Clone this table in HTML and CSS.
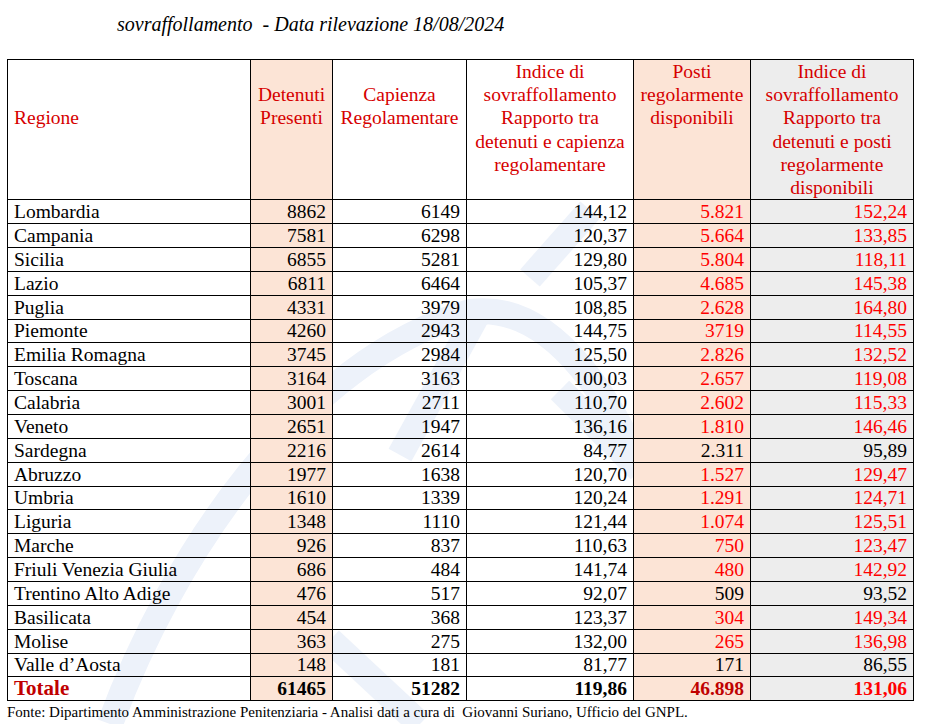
FILE: index.html
```html
<!DOCTYPE html>
<html lang="it">
<head>
<meta charset="utf-8">
<title>Sovraffollamento - Data rilevazione 18/08/2024</title>
<link rel="stylesheet" href="styles.css">
</head>
<body>
<div class="page">
  <svg class="watermark" width="940" height="724" viewBox="0 0 940 724" aria-hidden="true">
    <g fill="none" stroke="#edf2fa" stroke-width="26" stroke-linecap="butt">
      <path d="M110 724 C 170 560, 300 360, 470 312 C 560 300, 620 420, 640 470"/>
      <path d="M400 455 L 480 310"/>
      <path d="M530 278 L 590 210"/>
      <path d="M560 390 L 640 470"/>
      <path d="M330 640 L 420 724"/>
    </g>
  </svg>
  <h1 class="title">sovraffollamento&nbsp; - Data rilevazione 18/08/2024</h1>
  <table class="grid">
    <colgroup>
      <col class="c1"><col class="c2"><col class="c3"><col class="c4"><col class="c5"><col class="c6">
    </colgroup>
    <thead>
      <tr class="head">
        <th class="h-left pad2">Regione</th>
        <th class="pink pad1">Detenuti Presenti</th>
        <th class="pad1">Capienza Regolamentare</th>
        <th>Indice di sovraffollamento Rapporto tra detenuti e capienza regolamentare</th>
        <th class="pink">Posti regolarmente disponibili</th>
        <th class="grey">Indice di sovraffollamento Rapporto tra detenuti e posti regolarmente disponibili</th>
      </tr>
    </thead>
    <tbody>
      <tr><td class="name">Lombardia</td><td class="pink">8862</td><td>6149</td><td>144,12</td><td class="pink red">5.821</td><td class="grey red">152,24</td></tr>
      <tr><td class="name">Campania</td><td class="pink">7581</td><td>6298</td><td>120,37</td><td class="pink red">5.664</td><td class="grey red">133,85</td></tr>
      <tr><td class="name">Sicilia</td><td class="pink">6855</td><td>5281</td><td>129,80</td><td class="pink red">5.804</td><td class="grey red">118,11</td></tr>
      <tr><td class="name">Lazio</td><td class="pink">6811</td><td>6464</td><td>105,37</td><td class="pink red">4.685</td><td class="grey red">145,38</td></tr>
      <tr><td class="name">Puglia</td><td class="pink">4331</td><td>3979</td><td>108,85</td><td class="pink red">2.628</td><td class="grey red">164,80</td></tr>
      <tr><td class="name">Piemonte</td><td class="pink">4260</td><td>2943</td><td>144,75</td><td class="pink red">3719</td><td class="grey red">114,55</td></tr>
      <tr><td class="name">Emilia Romagna</td><td class="pink">3745</td><td>2984</td><td>125,50</td><td class="pink red">2.826</td><td class="grey red">132,52</td></tr>
      <tr><td class="name">Toscana</td><td class="pink">3164</td><td>3163</td><td>100,03</td><td class="pink red">2.657</td><td class="grey red">119,08</td></tr>
      <tr><td class="name">Calabria</td><td class="pink">3001</td><td>2711</td><td>110,70</td><td class="pink red">2.602</td><td class="grey red">115,33</td></tr>
      <tr><td class="name">Veneto</td><td class="pink">2651</td><td>1947</td><td>136,16</td><td class="pink red">1.810</td><td class="grey red">146,46</td></tr>
      <tr><td class="name">Sardegna</td><td class="pink">2216</td><td>2614</td><td>84,77</td><td class="pink">2.311</td><td class="grey">95,89</td></tr>
      <tr><td class="name">Abruzzo</td><td class="pink">1977</td><td>1638</td><td>120,70</td><td class="pink red">1.527</td><td class="grey red">129,47</td></tr>
      <tr><td class="name">Umbria</td><td class="pink">1610</td><td>1339</td><td>120,24</td><td class="pink red">1.291</td><td class="grey red">124,71</td></tr>
      <tr><td class="name">Liguria</td><td class="pink">1348</td><td>1110</td><td>121,44</td><td class="pink red">1.074</td><td class="grey red">125,51</td></tr>
      <tr><td class="name">Marche</td><td class="pink">926</td><td>837</td><td>110,63</td><td class="pink red">750</td><td class="grey red">123,47</td></tr>
      <tr><td class="name">Friuli Venezia Giulia</td><td class="pink">686</td><td>484</td><td>141,74</td><td class="pink red">480</td><td class="grey red">142,92</td></tr>
      <tr><td class="name">Trentino Alto Adige</td><td class="pink">476</td><td>517</td><td>92,07</td><td class="pink">509</td><td class="grey">93,52</td></tr>
      <tr><td class="name">Basilicata</td><td class="pink">454</td><td>368</td><td>123,37</td><td class="pink red">304</td><td class="grey red">149,34</td></tr>
      <tr><td class="name">Molise</td><td class="pink">363</td><td>275</td><td>132,00</td><td class="pink red">265</td><td class="grey red">136,98</td></tr>
      <tr><td class="name">Valle d’Aosta</td><td class="pink">148</td><td>181</td><td>81,77</td><td class="pink">171</td><td class="grey">86,55</td></tr>
      <tr class="total"><td class="name total-label">Totale</td><td class="pink">61465</td><td>51282</td><td>119,86</td><td class="pink dark-red">46.898</td><td class="grey red">131,06</td></tr>
    </tbody>
  </table>
  <p class="source">Fonte: Dipartimento Amministrazione Penitenziaria - Analisi dati a cura di&nbsp; Giovanni Suriano, Ufficio del GNPL.</p>
</div>
</body>
</html>
```
FILE: styles.css
```css
* { box-sizing: border-box; }

body {
  margin: 0;
  background: #ffffff;
  color: #000000;
  font-family: "Liberation Serif", "Times New Roman", serif;
}

.page {
  position: relative;
  width: 940px;
  height: 724px;
  overflow: hidden;
}

.watermark {
  position: absolute;
  left: 0;
  top: 0;
}

.title {
  position: relative;
  margin: 0;
  height: 59px;
  padding: 12px 0 0 117px;
  font-size: 20px;
  line-height: 24px;
  font-style: italic;
  font-weight: normal;
}

.grid {
  position: relative;
  margin-left: 7px;
  width: 906px;
  border-collapse: collapse;
  table-layout: fixed;
  font-size: 19.5px;
}

.c1 { width: 243px; }
.c2 { width: 82px; }
.c3 { width: 134px; }
.c4 { width: 167px; }
.c5 { width: 117px; }
.c6 { width: 163px; }

.grid th,
.grid td {
  border: 1px solid #000000;
  padding: 0 6px;
}

.head th {
  height: 139px;
  vertical-align: top;
  text-align: center;
  font-weight: normal;
  color: #d60000;
  line-height: 23.2px;
  padding: 0 2px;
}

.head .h-left { text-align: left; padding-left: 6px; }
.head .pad1 { padding-top: 23px; }
.head .pad2 { padding-top: 46px; }

.grid tbody tr { height: 23.86px; }

.grid td {
  text-align: right;
  line-height: 21px;
  white-space: nowrap;
}

.grid td.name { text-align: left; }

.pink { background: #fce4d6; }
.grey { background: #ededed; }
.red { color: #ff0000; }
.dark-red { color: #c00000; }

.total td { font-weight: bold; }
.total .total-label { color: #c00000; font-size: 21px; }

.source {
  position: relative;
  margin: 2px 0 0 7px;
  font-size: 15px;
  line-height: 18px;
  white-space: nowrap;
}
```
